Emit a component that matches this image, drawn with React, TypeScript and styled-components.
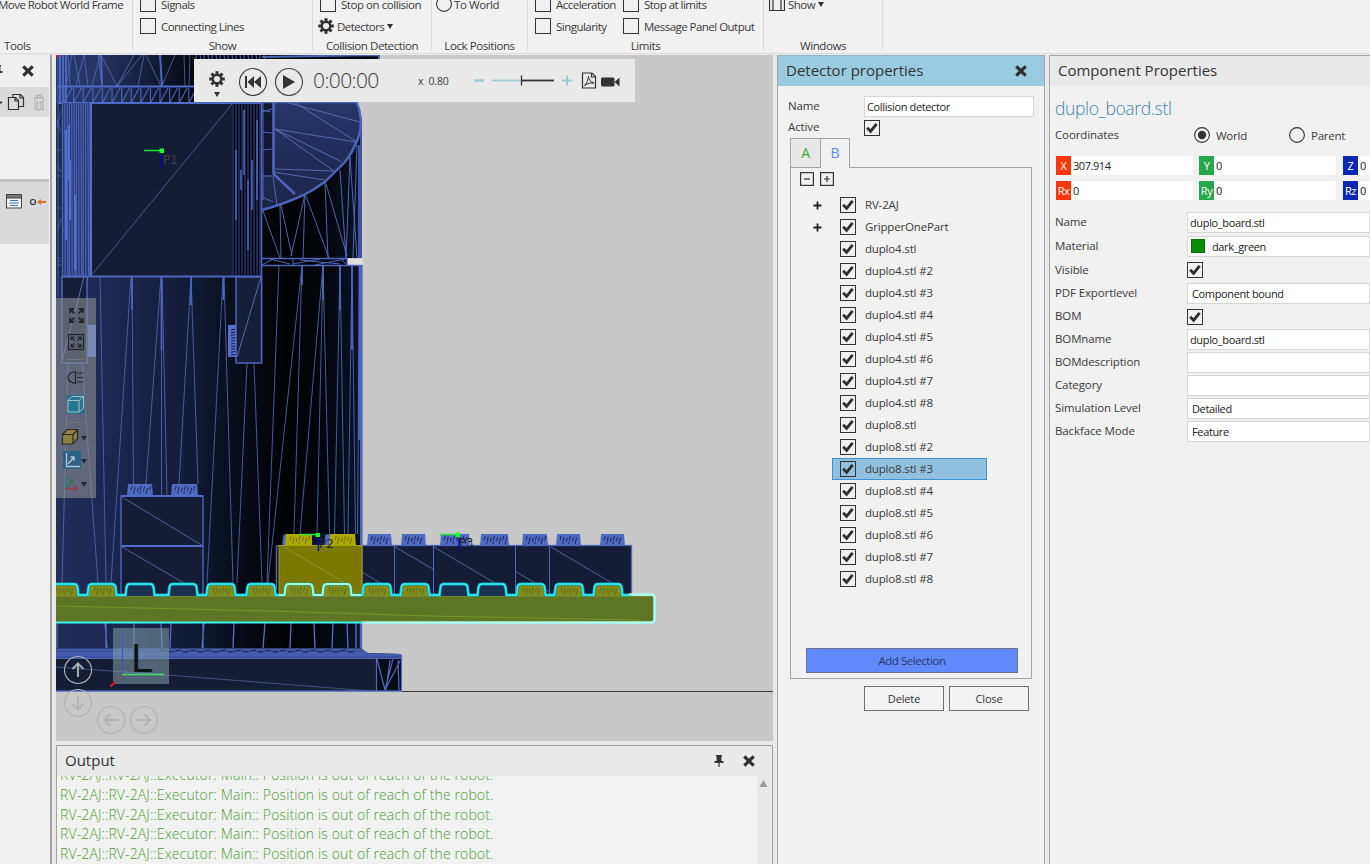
import React from "react";
import styled, { createGlobalStyle, css } from "styled-components";

const Global = createGlobalStyle`
  * { box-sizing: border-box; }
  html, body { margin: 0; padding: 0; overflow: hidden; }
  body {
    font-family: "Open Sans", "Noto Sans", sans-serif;
    font-size: 11.5px;
    letter-spacing: -0.12px;
    color: #3a3a3a;
    background: #e9e9e9;
  }
  svg { display: block; flex: none; }
`;

const Shell = styled.div`
  width: 1370px;
  height: 864px;
  overflow: hidden;
  display: flex;
  flex-direction: column;
  background: #e9e9e9;
  white-space: nowrap;
`;

/* ---------- ribbon ---------- */
const Ribbon = styled.header`
  height: 54px;
  flex: none;
  display: flex;
  background: #f1f1f1;
  border-bottom: 1px solid #dcdcdc;
  overflow: hidden;
`;
const Group = styled.section<{ $w: number }>`
  width: ${(p) => p.$w}px;
  height: 50px;
  border-right: 1px solid #d9d9d9;
  display: flex;
  flex-direction: column;
`;
const GroupBody = styled.div<{ $pad?: number }>`
  display: flex;
  height: 38px;
  flex: none;
  align-items: flex-end;
  padding-left: ${(p) => p.$pad ?? 7}px;
`;
const Stack = styled.div<{ $w?: number }>`
  display: flex;
  flex-direction: column;
  flex: none;
  height: 44px;
  width: ${(p) => (p.$w ? `${p.$w}px` : "auto")};
`;
const Option = styled.div<{ $gap?: number; $ls?: number; $shift?: number }>`
  height: 22px;
  padding-bottom: 2px;
  display: flex;
  align-items: center;
  gap: ${(p) => p.$gap ?? 5}px;
  letter-spacing: ${(p) => p.$ls ?? -0.53}px;
  margin-left: ${(p) => p.$shift ?? 0}px;
`;
const GroupTitle = styled.div<{ $left?: number }>`
  line-height: 16px;
  letter-spacing: -0.42px;
  ${(p) => (p.$left !== undefined ? css`padding-left: ${p.$left}px;` : css`text-align: center;`)}
`;
const Arrow = styled.i<{ $s?: number }>`
  border: ${(p) => p.$s ?? 3}px solid transparent;
  border-top: ${(p) => (p.$s ?? 3) + 2}px solid #333;
  border-bottom: 0;
`;

/* ---------- shared controls ---------- */
const Box = styled.span`
  width: 16px;
  height: 16px;
  flex: none;
  border: 1px solid #333;
  display: flex;
  align-items: center;
  justify-content: center;
`;
const Check = ({ on }: { on?: boolean }) => (
  <Box>
    {on && (
      <svg width="12" height="12" viewBox="0 0 12 12">
        <path d="M1.2 5.8 L4.6 9.4 L10.6 1.8" fill="none" stroke="#2f2f2f" strokeWidth="2.900" />
      </svg>
    )}
  </Box>
);
const Radio = ({ on }: { on?: boolean }) => (
  <svg width="16" height="16" viewBox="0 0 16 16">
    <circle cx="8" cy="8" r="7.4" fill="none" stroke="#333" strokeWidth="1.1" />
    {on && <circle cx="8" cy="8" r="4.2" fill="#333" />}
  </svg>
);
const Gear = ({ size = 16 }: { size?: number }) => (
  <svg width={size} height={size} viewBox="-8 -8 16 16">
    <circle r="4.3" fill="none" stroke="#333" strokeWidth="2.4" />
    {[0, 45, 90, 135, 180, 225, 270, 315].map((a) => (
      <rect key={a} x="-1.5" y="-7.8" width="3" height="3.2" fill="#333" transform={`rotate(${a})`} />
    ))}
  </svg>
);
const Cross = () => (
  <svg width="12" height="12" viewBox="0 0 12 12">
    <path d="M1.3 1.3 L10.7 10.7 M10.7 1.3 L1.3 10.7" stroke="#2f2f2f" strokeWidth="3.200" />
  </svg>
);
const Pin = () => (
  <svg width="12" height="14" viewBox="0 0 12 14">
    <path d="M3 1 H9 V2.5 H8.4 V7 H10.5 V9 H1.5 V7 H3.6 V2.5 H3 Z M5.4 9 H6.6 V13 H5.4 Z" fill="#333" />
  </svg>
);

/* ---------- main areas ---------- */
const Main = styled.main`
  flex: 1;
  min-height: 0;
  display: flex;
  padding-top: 1px;
`;
const LeftDock = styled.aside`
  width: 52px;
  margin-right: 4px;
  flex: none;
  background: #f1f1f1;
  border-right: 2px solid #a4a2a2;
  display: flex;
  flex-direction: column;
  overflow: hidden;
`;
const DockHead = styled.div`
  height: 32px;
  display: flex;
  align-items: center;
  gap: 18px;
  margin-left: -8px;
  background: #efefef;
`;
const DockBar = styled.div<{ $h: number; $line?: boolean }>`
  height: ${(p) => p.$h}px;
  margin-right: 1px;
  background: #dadada;
  display: flex;
  align-items: ${(p) => (p.$line ? "flex-start" : "center")};
  ${(p) => p.$line && css`border-top: 3px solid #c1c1c1; padding-top: 12px;`}
  gap: 8px;
`;
const DockGap = styled.div`
  height: 62px;
`;
const Center = styled.div`
  width: 717px;
  flex: none;
  display: flex;
  flex-direction: column;
`;
const Viewport = styled.div`
  position: relative;
  height: 686px;
  flex: none;
  background: #c8c8c8;
  overflow: hidden;
`;
const PlayBar = styled.div`
  position: absolute;
  left: 138px;
  top: 4px;
  width: 441px;
  height: 43px;
  background: #e9e9e9;
  display: flex;
  align-items: center;
  padding-left: 14px;
`;
const GearMenu = styled.div`
  display: flex;
  flex-direction: column;
  align-items: center;
  width: 18px;
  gap: 5px;
  margin-right: 13px;
  padding-top: 6px;
`;
const Clock = styled.div`
  font-size: 21px;
  font-weight: 300;
  letter-spacing: -0.6px;
  width: 114px;
  padding: 0 0 2px 10px;
  line-height: 38px;
  color: #3c3c3c;
`;
const Rate = styled.div`
  width: 57px;
  padding-left: 1px;
  font-size: 10.5px;
  letter-spacing: -0.15px;
`;
const ToolStrip = styled.div`
  position: absolute;
  left: 0;
  top: 243px;
  width: 40px;
  height: 200px;
  background: rgba(142, 142, 146, 0.6);
`;
const Output = styled.section`
  margin-top: 4px;
  flex: 1;
  min-height: 0;
  border: 1px solid #a3a3a3;
  border-bottom: 0;
  display: flex;
  flex-direction: column;
  background: #f2f2f2;
`;
const PanelHead = styled.div<{ $active?: boolean }>`
  height: 30px;
  flex: none;
  display: flex;
  align-items: center;
  background: ${(p) => (p.$active ? "#9acbe1" : "#e9e9e9")};
  padding-left: 8px;
  font-size: 15px;
  letter-spacing: 0;
  color: #333;
`;
const HeadText = styled.span`
  flex: 1;
  line-height: 20px;
  padding-bottom: 2px;
`;
const HeadTools = styled.div`
  display: flex;
  align-items: center;
  gap: 18px;
  padding-right: 17px;
`;
const LogArea = styled.div`
  flex: 1;
  min-height: 0;
  display: flex;
`;
const LogLines = styled.div`
  flex: 1;
  overflow: hidden;
  padding-left: 3px;
  color: #4d9c38;
  font-size: 14px;
  font-weight: 300;
  letter-spacing: 0.125px;
`;
const LogLine = styled.div`
  height: 19.8px;
  line-height: 19.8px;
  &:first-child { margin-top: -11px; }
`;
const Scroll = styled.div`
  width: 15px;
  background: #e9e9e9;
  padding: 4px 0 0 2px;
`;

/* ---------- detector panel ---------- */
const Detector = styled.section`
  width: 268px;
  margin-left: 4px;
  flex: none;
  border: 1px solid #a3a3a3;
  border-bottom: 0;
  border-top-color: #8fb5c6;
  background: #f1f1f1;
  display: flex;
  flex-direction: column;
`;
const DetForm = styled.div`
  padding: 10px 10px 0;
  display: flex;
  flex-direction: column;
`;
const FormRow = styled.div<{ $h: number }>`
  height: ${(p) => p.$h}px;
  display: flex;
  align-items: center;
  > label { width: 76px; margin-top: -2px; }
`;
const Input = styled.div<{ $pad?: number }>`
  height: 21px;
  flex: 1;
  border: 1px solid #d6d6d6;
  background: #fff;
  color: #222;
  font-size: 11px;
  letter-spacing: -0.36px;
  padding-left: ${(p) => p.$pad ?? 2}px;
  display: flex;
  align-items: center;
  gap: 7px;
`;
const Tabs = styled.div`
  display: flex;
  height: 29px;
  margin-left: 12px;
  align-items: flex-end;
`;
const Tab = styled.div<{ $on?: boolean; $c: string }>`
  width: ${(p) => (p.$on ? 30 : 31)}px;
  height: ${(p) => (p.$on ? 30 : 29)}px;
  margin-right: -1px;
  margin-bottom: ${(p) => (p.$on ? -1 : 0)}px;
  border: 1px solid #a3a3a3;
  border-bottom: 0;
  background: ${(p) => (p.$on ? "#f1f1f1" : "#e8e8e8")};
  z-index: ${(p) => (p.$on ? 1 : 0)};
  color: ${(p) => p.$c};
  font-size: 14px;
  text-align: center;
  line-height: 28px;
`;
const TreePane = styled.div`
  margin: 0 12px;
  height: 512px;
  border: 1px solid #a3a3a3;
  display: flex;
  flex-direction: column;
`;
const TreeTools = styled.div`
  display: flex;
  gap: 6px;
  padding: 4px 0 0 9px;
  height: 26px;
`;
const TreeRow = styled.div<{ $sel?: boolean }>`
  height: 22px;
  margin-left: 41px;
  width: 155px;
  padding-left: 7px;
  display: flex;
  align-items: center;
  gap: 9px;
  border: 1px solid ${(p) => (p.$sel ? "#3d93cf" : "transparent")};
  background: ${(p) => (p.$sel ? "#92c1e0" : "transparent")};
`;
const TreeText = styled.span`
  padding-bottom: 1px;
  letter-spacing: -0.17px;
`;
const Expander = styled.span`
  width: 9px;
  margin-left: -27px;
  margin-right: 9px;
`;
const AddButton = styled.button`
  margin: auto 13px 5px 15px;
  height: 25px;
  border: 1px solid #6c7391;
  background: #628aff;
  color: #2c3766;
  font: inherit;
  letter-spacing: -0.45px;
  padding: 0;
`;
const ButtonRow = styled.div`
  display: flex;
  gap: 5px;
  margin: 7px 15px 0 0;
  justify-content: flex-end;
`;
const PlainButton = styled.button`
  width: 80px;
  height: 25px;
  border: 1px solid #707070;
  background: #f3f3f3;
  font: inherit;
  font-size: 11px;
  letter-spacing: -0.15px;
  color: #333;
  padding: 0;
`;

/* ---------- component panel ---------- */
const Component = styled.section`
  flex: 1;
  min-width: 0;
  margin-left: 4px;
  border-left: 1px solid #a3a3a3;
  border-top: 1px solid #a3a3a3;
  background: #f1f1f1;
  overflow: hidden;
`;
const CompName = styled.div`
  font-size: 17.5px;
  font-weight: 300;
  letter-spacing: -0.36px;
  color: #3f85ab;
  padding-left: 5px;
  height: 45px;
  line-height: 45px;
`;
const CoordMode = styled.div`
  display: flex;
  height: 20px;
  margin-top: -6px;
  align-items: center;
  padding-left: 5px;
  > label { width: 139px; flex: none; margin-top: -1px; }
`;
const Choice = styled.div<{ $w: number }>`
  width: ${(p) => p.$w}px;
  flex: none;
  display: flex;
  align-items: center;
  gap: 6px;
  letter-spacing: -0.25px;
`;
const Axes = styled.div`
  display: grid;
  grid-template-columns: 143px 144px 144px;
  row-gap: 6px;
  padding: 11px 0 0 6px;
`;
const AxisCell = styled.div`
  height: 19px;
  width: 137px;
  display: flex;
  background: #fff;
  color: #222;
  font-size: 11px;
  letter-spacing: -0.45px;
  line-height: 19px;
  gap: 2px;
`;
const AxisTag = styled.span<{ $c: string }>`
  width: 15px;
  background: ${(p) => p.$c};
  color: #fff;
  text-align: center;
`;
const PropList = styled.div`
  padding: 10px 0 0 5px;
`;
const Prop = styled.div<{ $h: number }>`
  height: ${(p) => p.$h}px;
  display: flex;
  align-items: center;
  > label { width: 132px; margin-top: -2px; }
`;
const Swatch = styled.span`
  width: 14px;
  height: 14px;
  background: #098a09;
  border: 1px solid #067006;
`;

/* ---------- 3D scene ---------- */
const LINE = "#4c66ba";
type Seg = [number, number, number, number];
const path = (s: Seg[]) => s.map((l) => `M${l[0]} ${l[1]}L${l[2]} ${l[3]}`).join("");

const columnEdges: Seg[] = [
  [68, 363, 62, 583], [82, 363, 98, 583], [100, 276, 106, 583], [131, 276, 111, 583], [132, 276, 133.5, 484],
  [161, 276, 146, 484], [161.5, 276, 161.5, 496], [162, 276, 167, 496], [191, 276, 179, 484], [191, 276, 198, 484],
  [223, 276, 207, 583], [224, 276, 233, 583], [247, 363, 237, 583], [254, 363, 262, 583], [279, 265, 267, 583],
  [302, 265, 268, 583], [302, 265, 294, 534], [323, 265, 300, 534], [323, 265, 317, 534], [323, 265, 329.5, 534],
  [340, 265, 334.5, 534], [340, 265, 344.5, 534], [352, 265, 348, 534], [352, 265, 355.5, 534], [359.5, 265, 357.5, 534],
];
const columnTips: Seg[] = [
  [132, 276, 132, 310], [161.5, 276, 161.5, 350], [191, 276, 191, 305], [223.5, 276, 223.5, 300], [302, 265, 302, 285],
  [323, 265, 323, 300], [340, 265, 340, 310], [352, 265, 352, 350], [359.5, 265, 359, 440],
];
const underEdges: Seg[] = [
  [57, 623, 57, 648], [105, 623, 107, 648], [106, 623, 106, 648], [134, 623, 134, 648], [161, 623, 162, 648],
  [171, 623, 170, 648], [204, 623, 202, 648], [203, 623, 203, 648], [234, 623, 233, 648], [265, 623, 263, 648],
  [291, 623, 290, 648], [314, 623, 315, 648], [333, 623, 332, 648], [347, 623, 348, 648], [356, 623, 356, 648],
];
const topEdges: Seg[] = [
  [84, 55, 76, 86], [84, 55, 88, 86], [100, 55, 92, 86], [98, 55, 102, 86], [101, 55, 117, 86], [142, 55, 117, 86],
  [117, 86, 134, 55], [144, 55, 138, 86], [146, 55, 161, 86], [160, 55, 162, 86], [175, 55, 162, 86], [184, 55, 185, 86], [190, 55, 189, 86],
  [72, 55, 66, 86], [68, 55, 70, 86], [74, 55, 80, 86],
];
const bandEdges: Seg[] = Array.from({ length: 14 }, (_, i) => {
  const x = 64 + i * 9.6;
  return [[x, 88, x, 103], [x, 103, x + 8, 88]] as Seg[];
}).flat();
const leftStrips: Seg[] = Array.from({ length: 13 }, (_, i) => [62.5 + i * 2.3, 103, 62.5 + i * 2.3 + (i % 3) * 0.4, 276] as Seg);
const rightStrips: Seg[] = Array.from({ length: 10 }, (_, i) => [233 + i * 3, 103, 233 + i * 3, 276] as Seg);
const stripHighlights: Seg[] = [[236, 150, 236, 220], [241, 170, 241, 190], [244, 110, 244, 175], [248, 180, 248, 250], [252, 160, 252, 210], [257, 120, 257, 200]];
const dome: Seg[] = [
  [285, 102, 360, 122], [294, 102, 357, 142], [275, 129, 356, 142], [275, 129, 342, 162], [275, 129, 334, 171],
  [275, 169, 334, 171], [273, 172, 325, 180], [273, 176, 277, 205], [262, 197, 273, 202],
];
const domeLeft: Seg[] = [[262, 112, 272, 109], [262, 110, 271, 112], [262, 132, 272, 133], [262, 150, 272, 149], [262, 176, 272, 176], [263, 103, 263, 200]];
const skirt: Seg[] = [
  [263, 211, 280, 258], [280, 204, 281, 258], [281, 205, 292, 256], [305, 194, 303, 258],
  [305, 194, 291, 256], [306, 196, 329, 258], [325, 182, 328, 258], [326, 184, 347, 256], [340, 170, 346, 258],
  [350, 157, 346, 258], [350, 157, 357, 258], [357, 145, 353, 258],
];
const gapBand: Seg[] = [[262, 265, 275, 258], [270, 259, 290, 264], [293, 258, 293, 265], [293, 264, 320, 259], [300, 260, 340, 264], [315, 265, 345, 259], [340, 258, 347, 265]];
const blueStuds: [number, number, number][] = [
  [127, 153, 484], [171, 198, 484], [367, 392, 534], [401, 426, 534], [440, 470, 534], [480, 509, 534],
  [522, 548, 534], [556, 581, 534], [600, 625, 534],
];
const boardStuds = [50, 88, 126, 169, 207, 247, 285, 323, 363, 401, 440, 478, 517, 555, 594];
const hollow = new Set([126, 169, 440, 478]);

const boardTop = boardStuds
  .map((x, i) => `${i ? "L" : "M"}${x - 0.5} 595 L${x + 0.5} 587 Q${x + 1} 584 ${x + 4} 584 H${x + 24} Q${x + 27} 584 ${x + 27.5} 587 L${x + 28.5} 595`)
  .join(" ");

const Ticks = ({ x0, x1, y, color }: { x0: number; x1: number; y: number; color: string }) => {
  const s: Seg[] = [];
  for (let x = x0 + 4, i = 0; x < x1 - 3; x += 3.1, i++) {
    const a = y + 2 + (i % 3) * 0.8;
    s.push([x + 1.2, a, x, a + 4.4]);
    if (i % 2) s.push([x, y + 7.5, x - 0.4, y + 10]);
  }
  return <path d={path(s)} stroke={color} strokeWidth="0.9" />;
};

const SHOULDER = "M262 102 H356.5 Q360 110 361 120 Q361 132 356.7 141.700 Q352 153 345 162 Q338 169 325 181.700 Q315 189 305 194.300 Q284 204 262 210";

const Scene = () => (
  <svg width="717" height="686" viewBox="56 55 717 686" fill="none">
    <defs>
      <linearGradient id="body" gradientUnits="userSpaceOnUse" x1="56" y1="0" x2="362" y2="0">
        <stop offset="0" stopColor="#202e5a" />
        <stop offset="0.25" stopColor="#19244a" />
        <stop offset="0.45" stopColor="#111a35" />
        <stop offset="0.6" stopColor="#080c18" />
        <stop offset="0.75" stopColor="#010203" />
        <stop offset="0.88" stopColor="#04060d" />
        <stop offset="1" stopColor="#0c142c" />
      </linearGradient>
      <linearGradient id="cap" gradientUnits="userSpaceOnUse" x1="56" y1="0" x2="200" y2="0">
        <stop offset="0" stopColor="#263a74" />
        <stop offset="0.3" stopColor="#243463" />
        <stop offset="0.65" stopColor="#141d38" />
        <stop offset="1" stopColor="#03050b" />
      </linearGradient>
      <linearGradient id="domeFill" gradientUnits="userSpaceOnUse" x1="0" y1="102" x2="0" y2="210">
        <stop offset="0" stopColor="#27356a" />
        <stop offset="1" stopColor="#1a2548" />
      </linearGradient>
    </defs>

    {/* robot column */}
    <path d="M56 55 H380 V60 H362 V258 H347 V265 H362 V652 H56 Z" fill="url(#body)" />
    <rect x="347" y="259" width="16" height="6" fill="#dedede" />
    <rect x="56" y="55" width="144" height="48" fill="url(#cap)" />
    <rect x="190" y="55" width="190" height="6" fill="#05080f" />
    <path d={path(topEdges)} stroke="#6478bd" strokeWidth="0.8" opacity="0.85" />
    <path d={path([[101, 55, 102, 86], [160, 55, 162, 86], [66, 55, 66, 103], [63, 55, 63, 103], [60, 55, 60, 103], [379, 55, 379, 60], [262, 57, 379, 55]])} stroke={LINE} strokeWidth="2" />
    <path d={path(Array.from({ length: 18 }, (_, i) => [196 + i * 4, 55, 196 + i * 4 + (i % 2), 60] as Seg))} stroke={LINE} strokeWidth="1" />
    <path d={path(bandEdges)} stroke={LINE} strokeWidth="1.1" />
    <path d="M58 86.500 H262 M58 103 H262" stroke="#4f6bc9" strokeWidth="2" />
    <path d="M58 57 V297 M57 120 L61 132 M61 110 L57 128 M57 150 H61 M57 164 L61 172 M57 176 H61 M57 208 H61 M58 230 L61 218 M57 258 H61 M57 261 H61 M57 265 H61" stroke={LINE} opacity="0.7" />
    <rect x="62" y="103" width="30" height="173" fill="#28396f" />
    <path d={path(leftStrips)} stroke={LINE} strokeWidth="1.1" />
    <path d={path([[69, 125, 69, 180], [70, 160, 70, 220], [75, 195, 75, 270], [66, 130, 66, 240], [91, 103, 91, 276]])} stroke="#5470cc" strokeWidth="2" />
    <rect x="92" y="104" width="140" height="172" fill="#151c35" />
    <path d="M92.500 274 L232 104" stroke="#4a568b" strokeWidth="1" />
    <rect x="232" y="104" width="30" height="172" fill="#04060e" />
    <path d={path(rightStrips)} stroke="#3e54a0" strokeWidth="0.9" />
    <path d={path(stripHighlights)} stroke={LINE} strokeWidth="1.6" />

    {/* rounded shoulder */}
    <path d="M350 60 H364 V122 H361 L350 100 Z" fill="#c8c8c8" />
    <path d={`${SHOULDER} Z`} fill="url(#domeFill)" />
    <rect x="262" y="103" width="11" height="72" fill="#101830" />
    <path d={path(dome)} stroke="#6277bf" strokeWidth="0.8" />
    <path d={path(domeLeft)} stroke={LINE} />
    <path d="M273.500 102 V174 L295 194" stroke={LINE} strokeWidth="2.600" />
    <path d={SHOULDER} stroke={LINE} strokeWidth="2.400" />
    <path d={path(skirt)} stroke="#5a6fb8" strokeWidth="0.9" />
    <path d="M361 118 V258 M359 145 V258" stroke={LINE} strokeWidth="1.600" />
    <path d="M262 258.500 H347 V265.500 H362 M262 265.500 H347" stroke={LINE} strokeWidth="1.300" />
    <path d={path(gapBand)} stroke={LINE} />
    <path d="M261.500 103 V363" stroke={LINE} strokeWidth="1.500" />

    {/* lower column */}
    <path d={path(columnEdges)} stroke="#5369b0" strokeWidth="0.85" />
    <path d={path(columnTips)} stroke="#4f68bb" strokeWidth="1.700" />
    <path d="M361.300 265 V546" stroke={LINE} strokeWidth="2.600" />
    <path d="M62 276.500 H262" stroke={LINE} strokeWidth="1.800" />
    <g stroke={LINE} strokeWidth="1.500">
      <rect x="62" y="277" width="25" height="86" fill="#161e3a" />
      <rect x="236" y="277" width="25.500" height="86" fill="#161e3a" />
    </g>
    <path d="M84 277 L62 361 M261 277 L237 357" stroke="#6174b4" strokeWidth="0.9" />
    <rect x="88" y="325" width="8" height="32" fill="#5f7fe8" />
    <rect x="228" y="325" width="8" height="32" fill="#5470cc" />
    <path d={path(Array.from({ length: 10 }, (_, i) => [231, 330 + i * 2.8, 235, 329 + i * 2.8] as Seg))} stroke="#141c38" />

    {/* stacked bricks */}
    {blueStuds.map(([a, b, y]) => (
      <g key={`${a}`}>
        <path d={`M${a} ${y + 12} L${a + 1} ${y} H${b - 1} L${b} ${y + 12} Z`} fill="#4f6ac2" />
        <Ticks x0={a} x1={b} y={y} color="#17204a" />
      </g>
    ))}
    <rect x="121" y="496" width="82" height="100" fill="#151c35" stroke={LINE} strokeWidth="1.400" />
    <path d="M121 496 H203 M121 546 H203" stroke="#526dc8" strokeWidth="2" />
    <path d="M122 497 L203 546 M122 547 L196 590" stroke="#5668a6" strokeWidth="0.9" />
    <rect x="362" y="545.500" width="269.500" height="50" fill="#151c35" stroke={LINE} strokeWidth="1.300" />
    <path d="M394.500 546 V594 M433.500 546 V594 M515.500 546 V594 M549.500 546 V594" stroke={LINE} />
    <path d="M362 572 L382 584 M395 547 L433 569 M434 547 L500 586 M515 571 L550 592 M551 547 L612 583" stroke="#5668a6" strokeWidth="0.9" />
    <path d="M276.500 546 H282 M276.500 546 V590" stroke={LINE} strokeWidth="1.600" />
    <rect x="312" y="534" width="20" height="12" fill="#0c1330" />
    <path d="M282 546 L283.500 534.500 H287 V546 Z M324 546 L325.500 534.500 H330 V546 Z" fill="#4f6ac2" />
    <path d="M285 546 L286 534 H312 V546 Z M329 546 L330 534 H355 L356 546 Z" fill="#b0a902" />
    <Ticks x0={286} x1={312} y={534} color="#6c6a00" />
    <Ticks x0={331} x1={355} y={534} color="#6c6a00" />
    <rect x="279" y="545.500" width="83" height="50" fill="#7b7803" stroke="#a5a013" />
    <path d="M284 547 L345 583" stroke="#99951c" />

    {/* base */}
    <path d={path(underEdges)} stroke="#5a6fba" strokeWidth="1.300" />
    <path d="M361 623 V648" stroke={LINE} strokeWidth="2.400" />
    <path d="M56 648 H361 L366 653 L401 654 L402 691 H56 Z" fill="#151c35" />
    <path d="M56 649 H362 L368 653 L401 654 V658 H56 Z" fill="#3c529e" />
    <path d="M56 649 H362 M56 653 H366 M56 655 H401 M56 658.500 H401" stroke="#4d66b8" />
    <path d={path(Array.from({ length: 26 }, (_, i) => [160 + i * 7.5, 651 + (i % 2), 166 + i * 7.5, 650 + (i % 2) * 2] as Seg))} stroke="#18224a" />
    <rect x="377" y="659" width="25" height="32" fill="#070b18" />
    <path d="M376.500 659 V691 M377 659 L385 690 M385 690 L393 659 M385 690 L400 661 M390 660 L386 690 M398 660 L399 690 M401.500 655 V691" stroke="#5369b5" strokeWidth="1.200" />
    <path d="M56 667 L180 676 L370 691" stroke="#4b598d" strokeWidth="0.9" />
    <path d="M56 691 H402" stroke={LINE} strokeWidth="1.400" />
    <path d="M402 691.500 H773" stroke="#3b3b3b" />

    {/* highlighted board */}
    {boardStuds.map((x) => (
      <g key={x}>
        <path d={`M${x} 597 L${x + 1} 587 Q${x + 1} 584 ${x + 4} 584 H${x + 24} Q${x + 27} 584 ${x + 27} 587 L${x + 28} 597 Z`} fill={hollow.has(x) ? "#1a3150" : "#7f8d1c"} />
        {!hollow.has(x) && <Ticks x0={x + 2} x1={x + 27} y={585} color="#59641c" />}
      </g>
    ))}
    <rect x="50" y="596" width="604" height="26" fill="#5f7526" />
    <path d="M56 596.500 H653" stroke="#74852c" />
    <path d="M56 606 L270 611 L430 616 L640 620" stroke="#7c9a25" strokeWidth="0.9" />
    <path d={`${boardTop} L629 595`} stroke="#14a3b6" strokeWidth="3" />
    <path d={`${boardTop} L629 595`} stroke="#35f5fa" strokeWidth="1.400" />
    <path d="M279 595 H284.500 L285.500 587 Q286 584 289 584 H309 Q312 584 312.500 587 L313.500 595 H322.500 L323.500 587 Q324 584 327 584 H347 Q350 584 350.500 587 L351.500 595 H361" stroke="#a5ffd3" strokeWidth="2" />
    <path d="M56 622.500 H362" stroke="#3cf5ef" strokeWidth="2.200" />
    <path d="M362 622.500 H652 Q654.500 622 654.500 619 V598 Q654.500 594.500 651 594.500 H629" stroke="#a8fff1" strokeWidth="2.400" />

    {/* frames */}
    <g fontFamily="DejaVu Sans, sans-serif" fontSize="12" letterSpacing="0">
      <path d="M144 150.500 H160 M300 534.500 H318 M440 534.500 H458" stroke="#1fe832" strokeWidth="1.300" />
      <path d="M161.500 154 V168 M318.500 538 V551 M459 538 V550" stroke="#0808a8" strokeWidth="1.400" />
      <path d="M159.500 148.500 h4.500 v4.500 h-4.500z M315.500 533 h4.500 v4 h-4.500z M455.500 532.500 h4.500 v4.500 h-4.500z" fill="#1cfa31" />
      <text x="163" y="164" fill="#3b3f4c">P1</text>
      <text x="319" y="548" fill="#22242c">P2</text>
      <text x="459" y="547" fill="#1c1e28" fontSize="11.500">P3</text>
    </g>

    {/* orientation cube */}
    <rect x="113" y="628" width="56" height="56" fill="#81a0ab" fillOpacity="0.55" />
    <path d="M122.500 633 V673" stroke="#3e51c9" />
    <path d="M122 674.500 H164" stroke="#45d96b" strokeWidth="1.300" />
    <path d="M122 675 L114 682" stroke="#9c434d" />
    <path d="M110.500 686.500 L115 682" stroke="#e01522" strokeWidth="2" />
    <text x="131" y="672" fontFamily="Liberation Sans, sans-serif" fontSize="40" fill="#0b1418">L</text>

    {/* navigation */}
    <g strokeWidth="1.200">
      <g stroke="#a9aab2">
        <circle cx="78" cy="670" r="13.500" />
        <path d="M78 677 V664 M72.500 669 L78 663.500 L83.500 669" strokeWidth="2" />
      </g>
      <g stroke="#b3b3b3">
        <circle cx="78" cy="703" r="13.500" />
        <path d="M78 696 V709 M72.500 704 L78 709.500 L83.500 704" strokeWidth="2" />
        <circle cx="111" cy="720" r="13.500" />
        <path d="M118 720 H105 M110 714.500 L104.500 720 L110 725.500" strokeWidth="2" />
        <circle cx="144" cy="720" r="13.500" />
        <path d="M137 720 H150 M145 714.500 L150.500 720 L145 725.500" strokeWidth="2" />
      </g>
    </g>
    <rect x="56" y="55" width="3" height="2" fill="#d3123a" />
  </svg>
);

const expandArrows = "M5.500 5.500 L1 1 M1 5 V1 H5 M9.500 5.500 L14 1 M10 1 H14 V5 M5.500 9.500 L1 14 M1 10 V14 H5 M9.500 9.500 L14 14 M14 10 V14 H10";

const StripIcons = () => (
  <svg width="40" height="200" viewBox="56 298 40 200" fill="none" stroke="#25262b">
    <g transform="translate(69 308)" strokeWidth="1.800"><path d={expandArrows} /></g>
    <rect x="68.500" y="334.500" width="15" height="15" strokeWidth="1.200" />
    <g transform="translate(70.500 336.500) scale(.74)" strokeWidth="1.800"><path d={expandArrows} /></g>
    <path d="M67 359.500 H84 M67 422.500 H84" stroke="#777" />
    <path d="M75.500 371.500 V383.500 Q68 382 68 377.500 Q68 373 75.500 371.500 Z M77 373 H83 M77 377.500 H83 M77 382 H83" strokeWidth="1.200" />
    <rect x="66.500" y="395" width="18" height="19" fill="#277491" stroke="none" />
    <path d="M68 400.500 H79 V412 H68 Z M68 400.500 L72 396.500 H83.500 L79 400.500 M83.500 396.500 V408 L79 412" stroke="#a5bdc6" />
    <path d="M62.500 434.500 L67 429.500 H77.500 V438.500 L73 444 H62.500 Z M62.500 434.500 H73 V444 M73 434.500 L77.500 429.500" fill="#8d8142" stroke="#2e2c22" strokeWidth="1.200" />
    <rect x="63" y="451" width="18" height="18" fill="#2d6286" stroke="none" />
    <path d="M66.500 453 V466.500 H80 M68 464 L74 457 M70.500 457 H74 V461" stroke="#b7c7d0" strokeWidth="1.300" />
    <path d="M65.500 475 V488.500" stroke="#297e83" strokeWidth="1.300" />
    <path d="M65 488.500 H77 M74.500 486 L77 488.500 L74.500 491" stroke="#983b44" strokeWidth="1.300" />
    <path d="M66 488 L73 480 M69.500 480 H73 V484" stroke="#237a4f" strokeWidth="1.300" />
    <path d="M81 436 h6 l-3 4.500z M81 459 h6 l-3 4.500z M81 482 h6 l-3 4.500z" fill="#25262b" stroke="none" />
  </svg>
);

const Transport = () => (
  <svg width="64" height="30" viewBox="0 0 64 30" fill="none">
    <circle cx="14" cy="16" r="13.500" stroke="#444" strokeWidth="1.200" />
    <path d="M6 10 H8 V22 H6 Z M15 10 V22 L8.500 16 Z M22 10 V22 L15 16 Z" fill="#333" />
    <circle cx="50" cy="16" r="13.500" stroke="#444" strokeWidth="1.200" />
    <path d="M44 9 V23 L56 16 Z" fill="#333" />
  </svg>
);

const SpeedSlider = () => (
  <svg width="150" height="20" viewBox="0 0 150 20" fill="none">
    <path d="M0 9.500 H10" stroke="#9fcbd8" strokeWidth="2.500" />
    <path d="M18 9.500 H47" stroke="#9fcbd8" strokeWidth="1.800" />
    <path d="M48 9.500 H80" stroke="#333" strokeWidth="1.800" />
    <path d="M47.500 4.500 V14.500" stroke="#333" strokeWidth="1.300" />
    <path d="M88 9.500 H98 M93 4.500 V14.500" stroke="#9fcbd8" strokeWidth="2" />
    <path d="M108.500 2 H118 L121.500 5.500 V17 H108.500 Z M117.500 2 V6 H121.500" stroke="#333" strokeWidth="1.200" />
    <path d="M110.500 14.500 Q114 11.500 114.500 5.500 Q115 10.500 120 12 Q115 11 110.500 14.500" stroke="#333" />
    <rect x="127" y="6.500" width="13.500" height="9" rx="1.500" fill="#333" />
    <path d="M140.500 11 L145.500 6.500 V15.500 Z" fill="#333" />
  </svg>
);

const log = "RV-2AJ::RV-2AJ::Executor: Main:: Position is out of reach of the robot.";
const tree = [
  "RV-2AJ", "GripperOnePart", "duplo4.stl", "duplo4.stl #2", "duplo4.stl #3", "duplo4.stl #4", "duplo4.stl #5",
  "duplo4.stl #6", "duplo4.stl #7", "duplo4.stl #8", "duplo8.stl", "duplo8.stl #2", "duplo8.stl #3", "duplo8.stl #4",
  "duplo8.stl #5", "duplo8.stl #6", "duplo8.stl #7", "duplo8.stl #8",
];
const axes: [string, string, string][] = [
  ["X", "307.914", "#fb360a"], ["Y", "0", "#27a74b"], ["Z", "0", "#0a28b4"],
  ["Rx", "0", "#fb360a"], ["Ry", "0", "#27a74b"], ["Rz", "0", "#0a28b4"],
];

const SquareSign = ({ plus }: { plus?: boolean }) => (
  <svg width="14" height="14" viewBox="0 0 14 14">
    <rect x="0.600" y="0.600" width="12.800" height="12.800" fill="none" stroke="#333" strokeWidth="1.200" />
    <path d={plus ? "M4 7 H10 M7 4 V10" : "M4 7 H10"} stroke="#333" strokeWidth="1.200" />
  </svg>
);

export default function App() {
  return (
    <Shell>
      <Global />
      <Ribbon>
        <Group $w={133}>
          <GroupBody $pad={0}>
            <Stack><Option $shift={-2}>Move Robot World Frame</Option></Stack>
          </GroupBody>
          <GroupTitle $left={4}>Tools</GroupTitle>
        </Group>
        <Group $w={180}>
          <GroupBody>
            <Stack>
              <Option><Check />Signals</Option>
              <Option><Check />Connecting Lines</Option>
            </Stack>
          </GroupBody>
          <GroupTitle>Show</GroupTitle>
        </Group>
        <Group $w={119}>
          <GroupBody>
            <Stack>
              <Option $ls={-0.45}><Check />Stop on collision</Option>
              <Option $shift={-2} $gap={3}><Gear />Detectors<Arrow /></Option>
            </Stack>
          </GroupBody>
          <GroupTitle>Collision Detection</GroupTitle>
        </Group>
        <Group $w={96}>
          <GroupBody $pad={4}>
            <Stack><Option $gap={2} $ls={-0.4}><Radio />To World</Option></Stack>
          </GroupBody>
          <GroupTitle>Lock Positions</GroupTitle>
        </Group>
        <Group $w={236}>
          <GroupBody>
            <Stack $w={88}>
              <Option><Check />Acceleration</Option>
              <Option><Check />Singularity</Option>
            </Stack>
            <Stack>
              <Option><Check />Stop at limits</Option>
              <Option><Check />Message Panel Output</Option>
            </Stack>
          </GroupBody>
          <GroupTitle>Limits</GroupTitle>
        </Group>
        <Group $w={119}>
          <GroupBody $pad={5}>
            <Stack>
              <Option $gap={3}>
                <svg width="16" height="14" viewBox="0 0 16 14" fill="none" stroke="#333">
                  <path d="M0.500 0 V13.500 H15.500 V0 M4 2 V13 M12 2 V13 M0.500 2.500 H15.500" strokeWidth="1.200" />
                </svg>
                Show<Arrow />
              </Option>
            </Stack>
          </GroupBody>
          <GroupTitle>Windows</GroupTitle>
        </Group>
      </Ribbon>
      <Main>
        <LeftDock>
          <DockHead><Pin /><Cross /></DockHead>
          <DockBar $h={30}>
            <svg width="50" height="20" viewBox="0 0 50 20" fill="none" stroke="#333">
              <path d="M0 10.500 H2" strokeWidth="2" />
              <path d="M13 5.500 V2.500 H20.500 L23.500 5.500 V14.500 H19 M20 2.500 V6 H23.500" strokeWidth="1.200" />
              <path d="M8.500 5.500 H15.500 L18.500 8.500 V17.500 H8.500 Z M15 5.500 V9 H18.500" strokeWidth="1.200" />
              <path d="M34 6 H44 M37 6 V3.500 H41 V6 M35 7.500 V17.500 H43 V7.500 M37.500 9 V16 M40.500 9 V16" stroke="#b4b4b4" strokeWidth="1.300" />
            </svg>
          </DockBar>
          <DockGap />
          <DockBar $h={65} $line>
            <svg width="50" height="16" viewBox="0 0 50 16" fill="none">
              <rect x="6.500" y="1" width="15" height="13" fill="#f4f4f4" stroke="#444" />
              <rect x="6.500" y="0.500" width="15" height="3.500" fill="#777" stroke="#444" />
              <path d="M10 6.500 H18 M9 9 H19 M10 11.500 H18" stroke="#3a75ae" strokeWidth="1.200" />
              <circle cx="33" cy="8" r="2.500" stroke="#333" strokeWidth="1.200" />
              <path d="M37 8 L41 5 V7 H46 V9 H41 V11 Z" fill="#d9702c" />
            </svg>
          </DockBar>
        </LeftDock>
        <Center>
          <Viewport>
            <Scene />
            <PlayBar>
              <GearMenu><Gear size={16} /><Arrow $s={3} /></GearMenu>
              <Transport />
              <Clock>0:00:00</Clock>
              <Rate>x&nbsp; 0.80</Rate>
              <SpeedSlider />
            </PlayBar>
            <ToolStrip><StripIcons /></ToolStrip>
          </Viewport>
          <Output>
            <PanelHead>
              <HeadText>Output</HeadText>
              <HeadTools><Pin /><Cross /></HeadTools>
            </PanelHead>
            <LogArea>
              <LogLines>
                {[0, 1, 2, 3, 4].map((i) => <LogLine key={i}>{log}</LogLine>)}
              </LogLines>
              <Scroll>
                <svg width="9" height="8" viewBox="0 0 9 8"><path d="M4.500 0 L8.500 7 H0.500 Z" fill="#999" /></svg>
              </Scroll>
            </LogArea>
          </Output>
        </Center>
        <Detector>
          <PanelHead $active>
            <HeadText>Detector properties</HeadText>
            <HeadTools><Cross /></HeadTools>
          </PanelHead>
          <DetForm>
            <FormRow $h={21}><label>Name</label><Input>Collision detector</Input></FormRow>
            <FormRow $h={21}><label>Active</label><Check on /></FormRow>
          </DetForm>
          <Tabs>
            <Tab $c="#3aa83f">A</Tab>
            <Tab $c="#5d86f0" $on>B</Tab>
          </Tabs>
          <TreePane>
            <TreeTools><SquareSign /><SquareSign plus /></TreeTools>
            {tree.map((t, i) => (
              <TreeRow key={t} $sel={t === "duplo8.stl #3"}>
                {i < 2 && (
                  <Expander>
                    <svg width="9" height="9" viewBox="0 0 9 9"><path d="M0.500 4.500 H8.500 M4.500 0.500 V8.500" stroke="#222" strokeWidth="1.800" /></svg>
                  </Expander>
                )}
                <Check on />
                <TreeText>{t}</TreeText>
              </TreeRow>
            ))}
            <AddButton>Add Selection</AddButton>
          </TreePane>
          <ButtonRow>
            <PlainButton>Delete</PlainButton>
            <PlainButton>Close</PlainButton>
          </ButtonRow>
        </Detector>
        <Component>
          <PanelHead><HeadText>Component Properties</HeadText></PanelHead>
          <CompName>duplo_board.stl</CompName>
          <CoordMode>
            <label>Coordinates</label>
            <Choice $w={95}><Radio on />World</Choice>
            <Choice $w={75}><Radio />Parent</Choice>
          </CoordMode>
          <Axes>
            {axes.map(([k, v, c]) => (
              <AxisCell key={k}><AxisTag $c={c}>{k}</AxisTag>{v}</AxisCell>
            ))}
          </Axes>
          <PropList>
            <Prop $h={24}><label>Name</label><Input>duplo_board.stl</Input></Prop>
            <Prop $h={24}><label>Material</label><Input $pad={3}><Swatch />dark_green</Input></Prop>
            <Prop $h={24}><label>Visible</label><Check on /></Prop>
            <Prop $h={23}><label>PDF Exportlevel</label><Input $pad={4}>Component bound</Input></Prop>
            <Prop $h={23}><label>BOM</label><Check on /></Prop>
            <Prop $h={23}><label>BOMname</label><Input>duplo_board.stl</Input></Prop>
            <Prop $h={23}><label>BOMdescription</label><Input /></Prop>
            <Prop $h={23}><label>Category</label><Input /></Prop>
            <Prop $h={23}><label>Simulation Level</label><Input $pad={4}>Detailed</Input></Prop>
            <Prop $h={23}><label>Backface Mode</label><Input $pad={4}>Feature</Input></Prop>
          </PropList>
        </Component>
      </Main>
    </Shell>
  );
}
